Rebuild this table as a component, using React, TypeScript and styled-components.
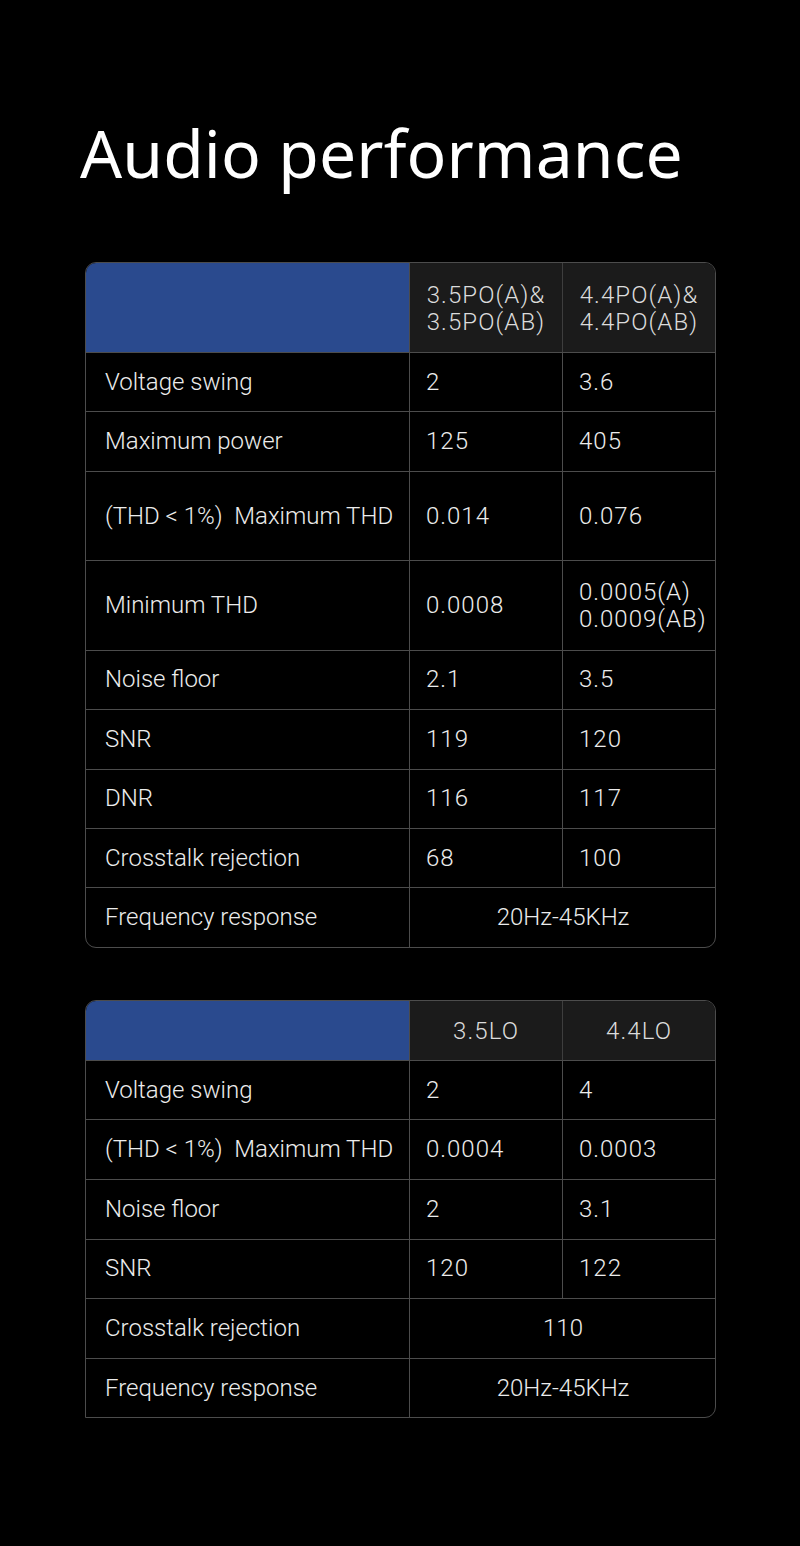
import styled, { createGlobalStyle } from "styled-components";

type Row = {
  label: string;
  values: string[];
  tall?: boolean;
};

const firstTable: Row[] = [
  { label: "Voltage swing", values: ["2", "3.6"] },
  { label: "Maximum power", values: ["125", "405"] },
  { label: "(THD < 1%)  Maximum THD", values: ["0.014", "0.076"], tall: true },
  { label: "Minimum THD", values: ["0.0008", "0.0005(A)\n0.0009(AB)"], tall: true },
  { label: "Noise floor", values: ["2.1", "3.5"] },
  { label: "SNR", values: ["119", "120"] },
  { label: "DNR", values: ["116", "117"] },
  { label: "Crosstalk rejection", values: ["68", "100"] },
  { label: "Frequency response", values: ["20Hz-45KHz"] },
];

const secondTable: Row[] = [
  { label: "Voltage swing", values: ["2", "4"] },
  { label: "(THD < 1%)  Maximum THD", values: ["0.0004", "0.0003"] },
  { label: "Noise floor", values: ["2", "3.1"] },
  { label: "SNR", values: ["120", "122"] },
  { label: "Crosstalk rejection", values: ["110"] },
  { label: "Frequency response", values: ["20Hz-45KHz"] },
];

const SpecTable = ({
  heads,
  rows,
  headHeight,
  rowHeight,
  squareBottomLeft,
}: {
  heads: string[];
  rows: Row[];
  headHeight: number;
  rowHeight: number;
  squareBottomLeft?: boolean;
}) => (
  <Table $squareBottomLeft={squareBottomLeft}>
    <BlueHead $height={headHeight} />
    {heads.map((h) => (
      <HeadCell key={h} $height={headHeight}>
        {h}
      </HeadCell>
    ))}
    {rows.map((row, i) => {
      const height = row.tall ? 89.5 : rowHeight;
      return (
        <RowGroup key={row.label + i}>
          <LabelCell $height={height}>{row.label}</LabelCell>
          {row.values.length === 1 ? (
            <SpanCell $height={height}>{row.values[0]}</SpanCell>
          ) : (
            row.values.map((v, j) => (
              <ValueCell
                key={j}
                $height={height}
                $edge={j === row.values.length - 1}
              >
                {v}
              </ValueCell>
            ))
          )}
        </RowGroup>
      );
    })}
  </Table>
);

const App = () => (
  <>
    <GlobalStyle />
    <Page>
      <Title>Audio performance</Title>
      <SpecTable
        heads={["3.5PO(A)&\n3.5PO(AB)", "4.4PO(A)&\n4.4PO(AB)"]}
        rows={firstTable}
        headHeight={89}
        rowHeight={59.4}
      />
      <Gap />
      <SpecTable
        heads={["3.5LO", "4.4LO"]}
        rows={secondTable}
        headHeight={59}
        rowHeight={59.6}
        squareBottomLeft
      />
    </Page>
  </>
);

const GlobalStyle = createGlobalStyle`
  html, body {
    margin: 0;
    padding: 0;
    background: #000;
  }
`;

const Page = styled.div`
  width: 800px;
  height: 1546px;
  background: #000;
  color: #ececec;
  font-family: Roboto, "Noto Sans", sans-serif;
  padding: 109px 0 0 85px;
  box-sizing: border-box;
`;

const Title = styled.h1`
  margin: 0 0 0 -5px;
  font-family: "Noto Sans", sans-serif;
  font-weight: 400;
  font-size: 66px;
  line-height: 86px;
  color: #fff;
  letter-spacing: 0.1px;
  height: 153px;
`;

const Gap = styled.div`
  height: 52px;
`;

const Table = styled.div<{ $squareBottomLeft?: boolean }>`
  display: grid;
  grid-template-columns: 324px 153px 153px;
  width: 631px;
  box-sizing: border-box;
  border: 1.5px solid #4c4c4c;
  border-radius: ${({ $squareBottomLeft }) =>
    $squareBottomLeft ? "11px 11px 11px 0" : "11px"};
  overflow: hidden;
`;

const RowGroup = styled.div`
  display: contents;
`;

const BlueHead = styled.div<{ $height: number }>`
  height: ${({ $height }) => $height}px;
  background: #2a4a8e;
  box-sizing: border-box;
  border-right: 1.5px solid #4c4c4c;
`;

const HeadCell = styled.div<{ $height: number }>`
  height: ${({ $height }) => $height}px;
  background: #1b1b1b;
  color: #dcdcdc;
  box-sizing: border-box;
  border-right: 1.5px solid #3e3e3e;
  display: flex;
  align-items: center;
  justify-content: center;
  white-space: pre-line;
  text-align: left;
  font-size: 24px;
  font-weight: 300;
  line-height: 27px;
  letter-spacing: 1.1px;
  padding-top: 2px;

  &:last-of-type {
    border-right: none;
  }
`;

const BaseCell = styled.div<{ $height: number }>`
  height: ${({ $height }) => $height}px;
  box-sizing: border-box;
  border-top: 1.5px solid #4c4c4c;
  display: flex;
  align-items: center;
  font-size: 24px;
  font-weight: 300;
  line-height: 27px;
  white-space: pre;
`;

const LabelCell = styled(BaseCell)`
  padding-left: 19px;
  border-right: 1.5px solid #4c4c4c;
`;

const ValueCell = styled(BaseCell)<{ $edge?: boolean }>`
  padding-left: 16px;
  letter-spacing: 1px;
  border-right: ${({ $edge }) => ($edge ? "none" : "1.5px solid #4c4c4c")};
`;

const SpanCell = styled(BaseCell)`
  grid-column: span 2;
  justify-content: center;
`;

export default App;
